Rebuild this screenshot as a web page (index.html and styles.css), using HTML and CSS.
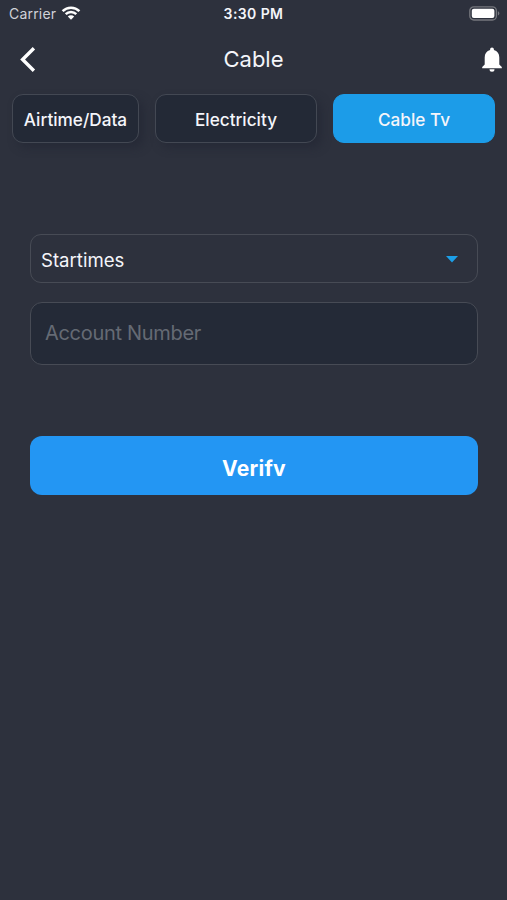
FILE: index.html
```html
<!DOCTYPE html>
<html lang="en">
<head>
  <meta charset="UTF-8">
  <meta name="viewport" content="width=device-width, initial-scale=1.0">
  <title>Cable</title>
  <link rel="stylesheet" href="styles.css">
</head>
<body>
  <div class="status-bar">
    <div class="carrier">
      <span>Carrier</span>
      <svg class="wifi" width="20" height="14" viewBox="0 0 20 14">
        <path d="M1.6 5.200a12 12 0 0 1 16.800 0M4.700 8.200a7.600 7.600 0 0 1 10.600 0" fill="none" stroke="#fff" stroke-width="2.5"/>
        <path d="M10 13.800l-3.200-3.200a4.600 4.600 0 0 1 6.400 0z" fill="#fff"/>
      </svg>
    </div>
    <div class="time">3:30 PM</div>
    <div class="battery">
      <svg width="31" height="15" viewBox="0 0 31 15">
        <rect x="0.8" y="0.8" width="26.6" height="13.2" rx="4" fill="none" stroke="#75777d" stroke-width="1.3"/>
        <rect x="2.8" y="2.7" width="22.6" height="9.4" rx="2" fill="#fff"/>
        <path d="M28.9 5.2a2.4 2.4 0 0 1 0 4.4z" fill="#75777d"/>
      </svg>
    </div>
  </div>

  <header class="header">
    <svg class="back" width="16" height="25" viewBox="0 0 16 25">
      <path d="M13.9 1.3L2.6 12.5l11.3 11.2" fill="none" stroke="#fff" stroke-width="3.4"/>
    </svg>
    <h1 class="title">Cable</h1>
    <svg class="bell" width="20" height="25" viewBox="0 0 20 25">
      <path d="M10 0.4c1.1 0 1.9.8 1.9 1.9v.8c3.5.9 5.4 3.7 5.4 7.5v7l2.5 2.4v1.2H.2V20l2.5-2.4v-7c0-3.8 1.9-6.6 5.4-7.5v-.8C8.1 1.2 8.9.4 10 .4z" fill="#fff"/>
      <path d="M7.5 22.3h5a2.5 2.5 0 0 1-5 0z" fill="#fff"/>
    </svg>
  </header>

  <nav class="tabs">
    <button class="tab tab-small">Airtime/Data</button>
    <button class="tab">Electricity</button>
    <button class="tab active">Cable Tv</button>
  </nav>

  <main class="form">
    <div class="select">
      <span>Startimes</span>
      <svg width="12" height="7" viewBox="0 0 12 7">
        <path d="M0 0h12L6 6.4z" fill="#1c9fe8"/>
      </svg>
    </div>
    <input class="account" type="text" placeholder="Account Number">
    <button class="verify"><span class="verify-label">Verify</span></button>
  </main>
</body>
</html>
```

FILE: styles.css
```css
* {
  box-sizing: border-box;
}
body {
  margin: 0;
  min-height: 900px;
  background-color: #2d313d;
  color: #f4f5fa;
  font-family: Inter, sans-serif;
}
button,
input {
  font-family: inherit;
  margin: 0;
}
.status-bar {
  display: grid;
  grid-template-columns: 1fr auto 1fr;
  align-items: center;
  height: 28px;
  padding: 0 7px 1px 9px;
}
.carrier {
  display: flex;
  align-items: center;
  gap: 5px;
  font-size: 14px;
  letter-spacing: 0.2px;
  color: #d0d2d8;
}
.wifi {
  margin-top: -2px;
}
.time {
  margin-left: -2px;
  font-size: 14px;
  font-weight: 600;
  letter-spacing: 0.4px;
}
.battery {
  display: flex;
  justify-content: flex-end;
  margin-top: -1px;
}
.header {
  display: grid;
  grid-template-columns: 1fr auto 1fr;
  align-items: center;
  height: 62px;
  padding: 0 5px 0 20px;
}
.title {
  margin: 0 0 0 -15px;
  font-size: 22px;
  font-weight: 400;
}
.bell {
  justify-self: end;
}
.tabs {
  display: flex;
  gap: 16px;
  padding: 4px 12px 0;
}
.tab {
  flex: 1;
  height: 49px;
  padding: 2px 0 0;
  border: 1.5px solid #434853;
  border-radius: 11px;
  background-color: #232936;
  box-shadow: 5px 5px 8px rgba(31, 36, 49, 0.5);
  color: #f4f5fa;
  font-size: 17.2px;
  font-weight: 500;
}
.tab-small {
  flex: 0 0 127px;
}
.tab.active {
  border-color: #1c9ce8;
  background-color: #1c9ce8;
  box-shadow: none;
}
.form {
  display: flex;
  flex-direction: column;
  padding: 91px 29px 0 30px;
}
.select {
  display: flex;
  align-items: center;
  justify-content: space-between;
  height: 49px;
  padding: 2px 19px 0 10px;
  border: 1px solid #474b55;
  border-radius: 11px;
  font-size: 18.6px;
}
.account {
  width: 100%;
  height: 63px;
  margin-top: 19px;
  padding: 0 14px 1px;
  border: 1px solid #474b55;
  border-radius: 12px;
  background-color: #242a37;
  color: #f4f5fa;
  font-size: 20px;
  letter-spacing: -0.3px;
}
.account::placeholder {
  color: #656a74;
  opacity: 1;
}
.verify {
  display: flex;
  justify-content: center;
  height: 59px;
  margin-top: 71px;
  padding: 20px 0 0;
  border: none;
  border-radius: 12px;
  background-color: #2396f3;
  color: #fff;
}
/* fixed label height cuts off the descender */
.verify-label {
  height: 20px;
  overflow: hidden;
  font-size: 21px;
  font-weight: 700;
  letter-spacing: 0.3px;
  line-height: 25px;
}
```
